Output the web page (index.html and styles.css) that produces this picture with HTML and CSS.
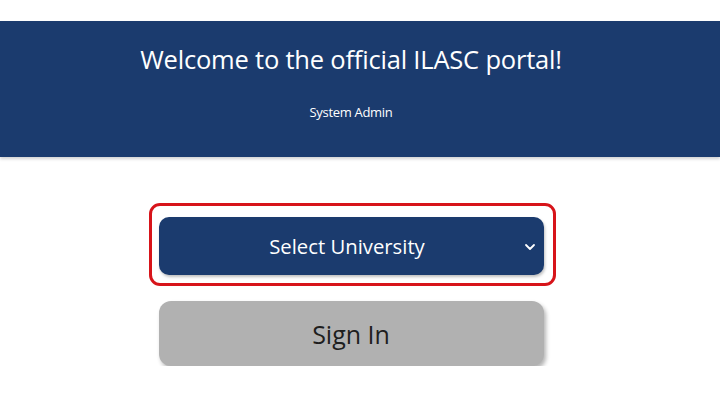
FILE: index.html
```html
<!DOCTYPE html>
<html lang="en">
<head>
<meta charset="utf-8">
<title>ILASC portal</title>
<link rel="stylesheet" href="styles.css">
</head>
<body>
<header class="banner">
  <h1 class="banner-title">Welcome to the official ILASC portal!</h1>
  <p class="banner-sub">System Admin</p>
</header>
<main class="login">
  <div class="highlight">
    <div class="select">
      <span class="select-label">Select University</span>
      <svg class="chevron" width="12" height="8" viewBox="0 0 12 8"><path d="M2 2 L6 6 L10 2" fill="none" stroke="#fff" stroke-width="1.8" stroke-linecap="round" stroke-linejoin="round"/></svg>
    </div>
  </div>
  <button class="signin">Sign In</button>
</main>
</body>
</html>
```
FILE: styles.css
```css
html, body {
  margin: 0;
  padding: 0;
  background: #fff;
  font-family: "Open Sans", "Liberation Sans", sans-serif;
}
.banner {
  margin-top: 21px;
  height: 136px;
  background: #1b3b6e;
  box-shadow: 0 2px 3px rgba(0,0,0,0.18);
  color: #fff;
  display: flex;
  flex-direction: column;
  align-items: center;
  box-sizing: border-box;
  padding-top: 21px;
  padding-right: 18px;
}
.banner-title {
  margin: 0;
  font-weight: 400;
  font-size: 25.5px;
  line-height: 34px;
  letter-spacing: -0.2px;
}
.banner-sub {
  margin: 28px 0 0;
  font-size: 13px;
  line-height: 16px;
  letter-spacing: -0.3px;
}
.login {
  display: flex;
  flex-direction: column;
  align-items: center;
  padding-top: 46px;
  padding-right: 16px;
}
.highlight {
  border: 3px solid #d7141a;
  border-radius: 11px;
  padding: 11px 9px 8px 7px;
}
.select {
  width: 385px;
  height: 58px;
  box-sizing: border-box;
  background: #1b3b6e;
  border-radius: 10px;
  box-shadow: 1px 2px 3px rgba(0,0,0,0.25);
  display: flex;
  align-items: center;
  justify-content: center;
  position: relative;
  color: #fff;
}
.select-label {
  font-size: 20.3px;
  margin-left: -8px;
}
.chevron {
  position: absolute;
  right: 8px;
  top: 26px;
}
.signin {
  margin-top: 15px;
  width: 385px;
  height: 65px;
  border: none;
  border-radius: 12px;
  background: #b1b1b1;
  box-shadow: 2px 3px 4px rgba(0,0,0,0.3);
  font-family: "Open Sans", "Liberation Sans", sans-serif;
  font-size: 25px;
  color: #1e1e1e;
  padding: 0;
  margin-left: -2px;
}
```
